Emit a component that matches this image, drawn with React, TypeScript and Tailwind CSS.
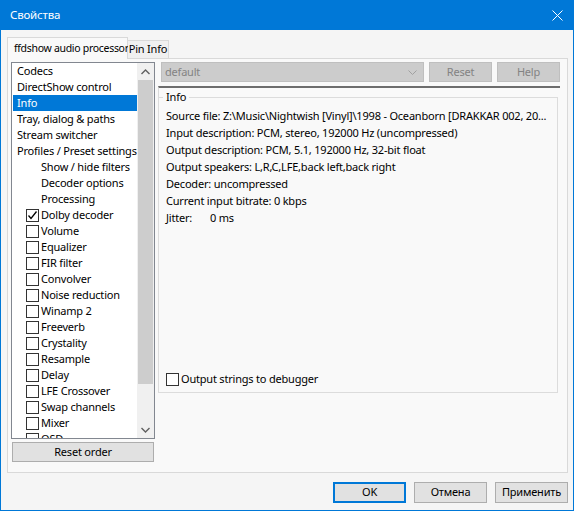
import React from "react";

const F = { fontFamily: '"Noto Sans", "Liberation Sans", sans-serif', letterSpacing: "-0.2px" };

type Item = { label: string; level: 0 | 1 | 2; checked?: boolean; selected?: boolean };

const items: Item[] = [
  { label: "Codecs", level: 0 },
  { label: "DirectShow control", level: 0 },
  { label: "Info", level: 0, selected: true },
  { label: "Tray, dialog & paths", level: 0 },
  { label: "Stream switcher", level: 0 },
  { label: "Profiles / Preset settings", level: 0 },
  { label: "Show / hide filters", level: 1 },
  { label: "Decoder options", level: 1 },
  { label: "Processing", level: 1 },
  { label: "Dolby decoder", level: 2, checked: true },
  { label: "Volume", level: 2 },
  { label: "Equalizer", level: 2 },
  { label: "FIR filter", level: 2 },
  { label: "Convolver", level: 2 },
  { label: "Noise reduction", level: 2 },
  { label: "Winamp 2", level: 2 },
  { label: "Freeverb", level: 2 },
  { label: "Crystality", level: 2 },
  { label: "Resample", level: 2 },
  { label: "Delay", level: 2 },
  { label: "LFE Crossover", level: 2 },
  { label: "Swap channels", level: 2 },
  { label: "Mixer", level: 2 },
  { label: "OSD", level: 2 },
];

function Check({ checked }: { checked?: boolean }) {
  return (
    <div className="w-[13px] h-[13px] border border-[#333333] bg-white flex items-center justify-center shrink-0">
      {checked && (
        <svg width="11" height="11" viewBox="0 0 11 11">
          <path d="M1.5 5.5 L4 8.5 L9.5 1.5" fill="none" stroke="#000" strokeWidth="1.3" />
        </svg>
      )}
    </div>
  );
}

function TreeRow({ it }: { it: Item }) {
  if (it.level === 2) {
    return (
      <div className="h-4 flex items-center pl-[13px] gap-[2px] text-black whitespace-nowrap">
        <Check checked={it.checked} />
        <span className="leading-4">{it.label}</span>
      </div>
    );
  }
  return (
    <div
      className={
        it.selected
          ? "h-4 flex items-center bg-[#0078d7] text-white pl-[4px]"
          : it.level === 1
          ? "h-4 flex items-center text-black pl-[28px]"
          : "h-4 flex items-center text-black pl-[4px]"
      }
    >
      <span className="leading-4 whitespace-nowrap">{it.label}</span>
    </div>
  );
}

function WinButton({ children, w, def, disabled }: { children: React.ReactNode; w: string; def?: boolean; disabled?: boolean }) {
  return (
    <div
      className={[
        "flex items-center justify-center whitespace-nowrap",
        w,
        def
          ? "border-2 border-[#0078d7] bg-[#e1e1e1] text-black"
          : disabled
          ? "border border-[#bfbfbf] bg-[#cccccc] text-[#838383]"
          : "border border-[#adadad] bg-[#e1e1e1] text-black",
      ].join(" ")}
    >
      {children}
    </div>
  );
}

export default function App() {
  return (
    <div className="w-[574px] h-[511px] bg-[#0078d7] px-[1px] pb-[1px] flex flex-col text-[11px]" style={F}>
      {/* title bar */}
      <div className="h-[30px] flex items-center justify-between pl-[9px] pr-[10px] text-white shrink-0">
        <span className="text-[11.5px]">Свойства</span>
        <svg width="11" height="11" viewBox="0 0 11 11">
          <path d="M0.5 0.5 L10.5 10.5 M10.5 0.5 L0.5 10.5" stroke="#fff" strokeWidth="1" fill="none" />
        </svg>
      </div>
      {/* body */}
      <div className="flex-1 bg-[#f5f5f5] flex flex-col pl-[6px] pr-[5px] pt-[7px]">
        {/* tabs */}
        <div className="flex items-end h-[21px] relative z-10">
          <div className="h-[22px] -mb-px w-[121px] border border-[#d9d9d9] border-b-0 bg-[#f9f9f9] pl-[6px] flex items-center text-black whitespace-nowrap text-[10.5px] tracking-[-0.3px]">
            ffdshow audio processor
          </div>
          <div className="h-[18px] w-[41px] border border-[#d9d9d9] border-l-0 border-b-0 bg-[#f0f0f0] flex items-center justify-center text-black whitespace-nowrap">
            Pin Info
          </div>
        </div>
        {/* tab panel */}
        <div className="h-[415px] w-[561px] border border-[#d9d9d9] bg-[#f9f9f9] flex pt-[3px] pl-[3px] gap-[3px]">
          {/* left column */}
          <div className="w-[144px] flex flex-col gap-[3px]">
            <div className="h-[377px] border border-[#828790] bg-white flex overflow-hidden">
              <div className="flex-1 pl-px overflow-hidden">
                {items.map((it) => (
                  <TreeRow key={it.label} it={it} />
                ))}
              </div>
              <div className="w-[17px] bg-[#f0f0f0] flex flex-col items-center">
                <div className="h-[17px] w-full flex items-center justify-center">
                  <svg width="9" height="6" viewBox="0 0 9 6">
                    <path d="M0.5 5 L4.5 1 L8.5 5" fill="none" stroke="#606060" strokeWidth="1.4" />
                  </svg>
                </div>
                <div className="h-[304px] w-[15px] bg-[#cdcdcd]" />
                <div className="flex-1" />
                <div className="h-[17px] w-full flex items-center justify-center">
                  <svg width="9" height="6" viewBox="0 0 9 6">
                    <path d="M0.5 1 L4.5 5 L8.5 1" fill="none" stroke="#606060" strokeWidth="1.4" />
                  </svg>
                </div>
              </div>
            </div>
            <div className="ml-px w-[142px] h-[20px] border border-[#adadad] bg-[#e1e1e1] flex items-center justify-center text-black">
              Reset order
            </div>
          </div>
          {/* right column */}
          <div className="w-[402px] flex flex-col">
            <div className="flex items-center pl-[3px] h-[20px] gap-[5px]">
              <div className="w-[263px] h-[20px] border border-[#bfbfbf] bg-[#cccccc] flex items-center justify-between pl-[3px] pr-[6px] text-[#838383]">
                <span>default</span>
                <svg width="9" height="5" viewBox="0 0 9 5">
                  <path d="M0.5 0.5 L4.5 4.5 L8.5 0.5" fill="none" stroke="#a0a0a0" strokeWidth="1" />
                </svg>
              </div>
              <WinButton w="w-[63px] h-[20px]" disabled>Reset</WinButton>
              <WinButton w="w-[63px] h-[20px]" disabled>Help</WinButton>
            </div>
            <div className="mt-[4px] w-[402px] border-t-2 border-[#6d6d6d] border-l border-l-[#dadada] h-[303px] pt-[9px]">
              <div className="relative w-[400px] h-[296px] border border-[#dcdcdc] -ml-px flex flex-col pl-[7px] pt-[9px] text-black">
                <span className="absolute -top-[9px] left-[4px] px-[3px] bg-[#f9f9f9] leading-4">Info</span>
                <div className="leading-[17px] whitespace-nowrap">
                  Source file: Z:\Music\Nightwish [Vinyl]\1998 - Oceanborn [DRAKKAR 002, 20...
                </div>
                <div className="leading-[17px]">Input description: PCM, stereo, 192000 Hz (uncompressed)</div>
                <div className="leading-[17px]">Output description: PCM, 5.1, 192000 Hz, 32-bit float</div>
                <div className="leading-[17px]">Output speakers: L,R,C,LFE,back left,back right</div>
                <div className="leading-[17px]">Decoder: uncompressed</div>
                <div className="leading-[17px]">Current input bitrate: 0 kbps</div>
                <div className="leading-[17px] flex">
                  <span className="w-[44px]">Jitter:</span>
                  <span>0 ms</span>
                </div>
                <div className="flex-1" />
                <div className="flex items-center gap-[2px] mb-[6px] h-[14px]">
                  <Check />
                  <span>Output strings to debugger</span>
                </div>
              </div>
            </div>
          </div>
        </div>
        {/* bottom buttons */}
        <div className="flex justify-end gap-[8px] mt-[9px]">
          <WinButton w="w-[73px] h-[21px]" def>OK</WinButton>
          <WinButton w="w-[73px] h-[21px]">Отмена</WinButton>
          <WinButton w="w-[73px] h-[21px]">Применить</WinButton>
        </div>
      </div>
    </div>
  );
}
